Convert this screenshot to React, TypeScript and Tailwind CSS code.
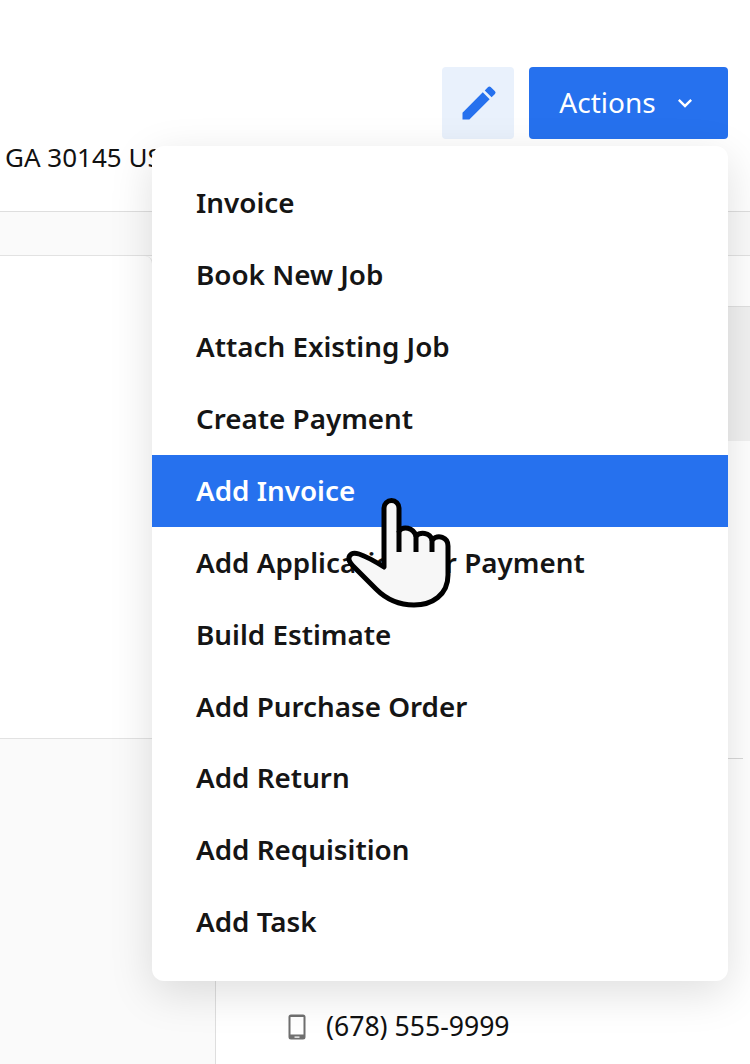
import { MdEdit, MdKeyboardArrowDown } from 'react-icons/md'

const menuItems = [
  'Invoice',
  'Book New Job',
  'Attach Existing Job',
  'Create Payment',
  'Add Invoice',
  'Add Application for Payment',
  'Build Estimate',
  'Add Purchase Order',
  'Add Return',
  'Add Requisition',
  'Add Task',
]

function HandCursor() {
  return (
    <svg className="absolute left-[330px] top-[480px]" width="150" height="140" viewBox="0 0 150 140" fill="none">
      <path
        d="M54 87 L54 28 A7.5 7.5 0 0 1 69 28 L69 51 C73 46 83 47 86 56 C90 52 100 52 102 60 C108 54 118 57 118 66 L118 95 C118 115 102 125 84 125 C68 125 56 119 46 109 L23 86 C15 78 20 71 29 74 C38 77 46 82 54 87 Z"
        fill="#f7f7f7"
        stroke="#000"
        strokeWidth="5"
        strokeLinejoin="round"
      />
      <path d="M69 51 L69 72 M86 56 L86 72 M102 60 L102 72" stroke="#000" strokeWidth="5" />
    </svg>
  )
}

function PhoneIcon() {
  return (
    <svg width="18" height="26" viewBox="0 0 18 26" className="text-[#6f6f6f]">
      <path
        fillRule="evenodd"
        fill="currentColor"
        d="M3 0.5h12a2.5 2.5 0 0 1 2.5 2.5v20a2.5 2.5 0 0 1-2.5 2.5H3A2.5 2.5 0 0 1 .5 23V3A2.5 2.5 0 0 1 3 .5zM2.5 3v17.5h13V3zM6.5 22.4v1.4h5v-1.4z"
      />
    </svg>
  )
}

export default function App() {
  return (
    <div className="relative h-[1064px] w-[750px] overflow-hidden bg-white font-['Noto_Sans',sans-serif] text-[#111]">
      {/* page behind the menu */}
      <div className="h-[212px] border-b border-[#dedede]">
        <div className="flex justify-end gap-[15px] pr-[22px] pt-[67px]">
          <button className="flex h-[72px] w-[72px] items-center justify-center rounded-[4px] bg-[#e9f1fc] pl-[2px] text-[#2671ee]">
            <MdEdit size={44} />
          </button>
          <button className="flex h-[72px] w-[199px] items-center justify-center gap-[15px] rounded-[4px] bg-[#2671ee] pb-[3px] pl-[1px] text-[28px] text-white">
            Actions
            <MdKeyboardArrowDown size={28} className="mt-[3px]" />
          </button>
        </div>
        <p className="mt-[-1px] pl-[5px] text-[26px] leading-[38px]">GA 30145 USA</p>
      </div>

      <div className="h-[44px] border-b border-[#e2e2e2] bg-[#fafafa]"></div>

      <div className="flex">
        <div className="w-[216px]">
          <div className="h-[483px] w-[153px] rounded-tr-[8px] border-r border-b border-[#e2e2e2] bg-white"></div>
          <div className="h-[325px] border-r border-[#dedede] bg-[#fafafa]"></div>
        </div>
        <div className="flex-1">
          <div className="ml-auto w-[60px]">
            <div className="h-[51px] border-b border-[#e0e0e0] bg-white"></div>
            <div className="h-[134px] bg-[#f1f1f1]"></div>
            <div className="mr-[7px] h-[318px] border-b border-[#d8d8d8] bg-white"></div>
          </div>
          <div className="mt-[250px] flex items-center gap-[20px] pl-[72px] text-[26.6px] leading-[36px]">
            <PhoneIcon />
            <span className="mt-[-1px]">(678) 555-9999</span>
          </div>
        </div>
      </div>

      {/* dropdown */}
      <div className="absolute left-[152px] top-[146px] w-[576px] rounded-[12px] bg-white pb-[23px] pt-[21.25px] shadow-[0_12px_44px_rgba(0,0,0,0.13)]">
        {menuItems.map((item) => (
          <div
            key={item}
            className={
              item === 'Add Invoice'
                ? 'flex h-[71.9px] items-center bg-[#2671ee] pl-[44px] text-[27.8px] font-semibold text-white'
                : 'flex h-[71.9px] items-center pl-[44px] text-[27.8px] font-semibold text-[#151515]'
            }
          >
            {item}
          </div>
        ))}
      </div>

      <HandCursor />
    </div>
  )
}
